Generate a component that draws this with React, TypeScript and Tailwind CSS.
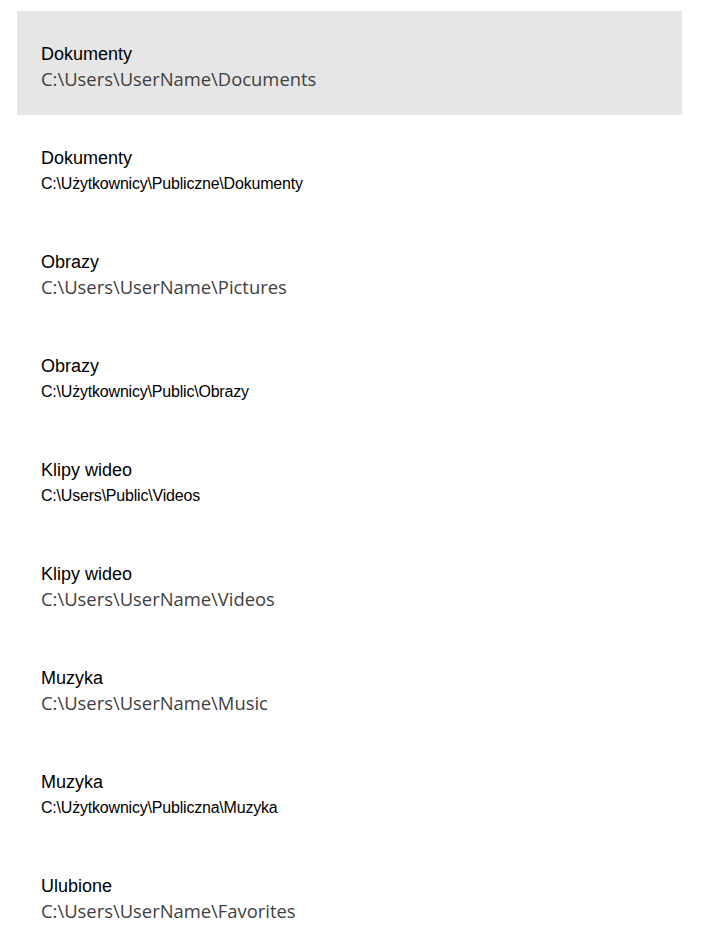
import React from 'react'

type Folder = {
  name: string
  path: string
  legacy?: boolean
}

const folders: Folder[] = [
  { name: 'Dokumenty', path: 'C:\\Users\\UserName\\Documents' },
  { name: 'Dokumenty', path: 'C:\\Użytkownicy\\Publiczne\\Dokumenty', legacy: true },
  { name: 'Obrazy', path: 'C:\\Users\\UserName\\Pictures' },
  { name: 'Obrazy', path: 'C:\\Użytkownicy\\Public\\Obrazy', legacy: true },
  { name: 'Klipy wideo', path: 'C:\\Users\\Public\\Videos', legacy: true },
  { name: 'Klipy wideo', path: 'C:\\Users\\UserName\\Videos' },
  { name: 'Muzyka', path: 'C:\\Users\\UserName\\Music' },
  { name: 'Muzyka', path: 'C:\\Użytkownicy\\Publiczna\\Muzyka', legacy: true },
  { name: 'Ulubione', path: 'C:\\Users\\UserName\\Favorites' },
]

export default function App() {
  return (
    <div className="min-h-screen bg-white pt-[11px]">
      <ul className="mx-[17px] w-[665px]">
        {folders.map((f, i) => (
          <li
            key={i}
            className={`h-[104px] pl-[24px] pt-[33px] ${i === 0 ? 'bg-[#e6e6e6]' : ''}`}
          >
            <div className="font-['Liberation_Sans',Arial,sans-serif] text-[18px] leading-[20px] text-black">
              {f.name}
            </div>
            {f.legacy ? (
              <div className="mt-[7px] font-['Liberation_Sans',Arial,sans-serif] text-[16px] leading-[18px] tracking-[-0.2px] text-black">
                {f.path}
              </div>
            ) : (
              <div className="mt-[3px] font-['Open_Sans',sans-serif] text-[18.4px] leading-[24px] text-[#404040]">
                {f.path}
              </div>
            )}
          </li>
        ))}
      </ul>
    </div>
  )
}
